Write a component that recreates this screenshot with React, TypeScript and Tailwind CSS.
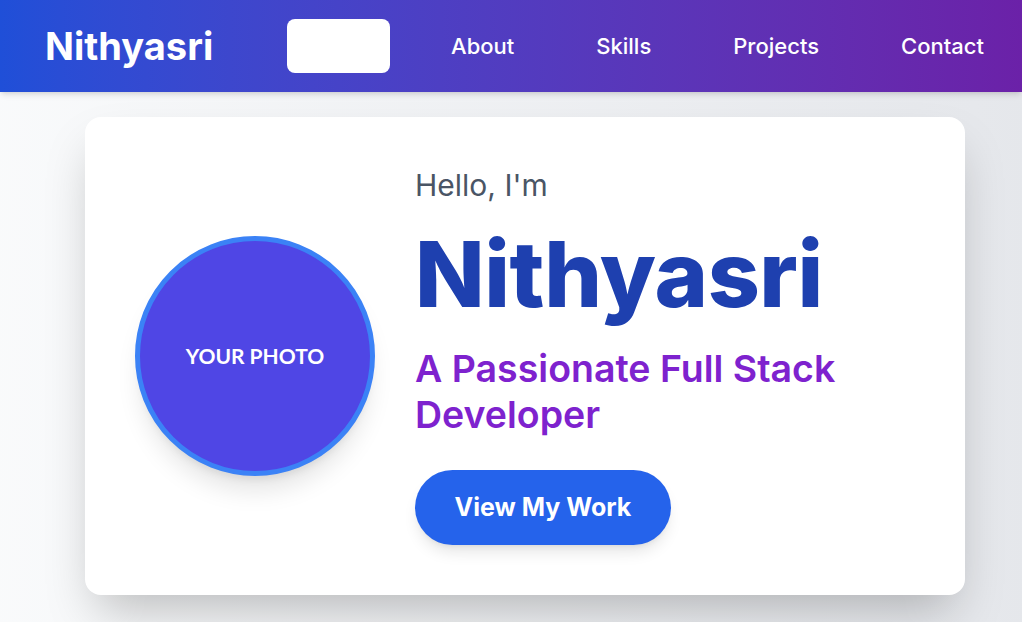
export default function App() {
  return (
    <div className="min-h-screen bg-gradient-to-r from-gray-50 to-gray-200 font-['Inter',sans-serif]">
      <header className="h-[92px] bg-gradient-to-r from-[#1f4fd8] to-[#6b21a8] shadow-md">
        <nav className="h-full flex items-center pl-[45px] pr-[38px]">
          <span className="text-[38px] font-bold text-white">Nithyasri</span>
          <div className="ml-[74px] w-[103px] h-[54px] bg-white rounded-lg" />
          <div className="ml-auto flex items-center gap-[82px] text-[22px] font-medium text-white">
            <a href="#about">About</a>
            <a href="#skills">Skills</a>
            <a href="#projects">Projects</a>
            <a href="#contact">Contact</a>
          </div>
        </nav>
      </header>

      <main className="flex pl-[85px] pt-[25px]">
        <section className="w-[880px] h-[478px] bg-white rounded-2xl shadow-2xl flex items-center px-[50px]">
          <div className="w-[240px] h-[240px] shrink-0 rounded-full bg-[#4f46e5] border-[5px] border-[#3b82f6] shadow-xl flex items-center justify-center">
            <span className="text-white text-[21px] font-bold font-['Lato',sans-serif]">YOUR PHOTO</span>
          </div>
          <div className="ml-[40px] flex flex-col">
            <p className="text-[30px] text-gray-600 leading-tight">Hello, I'm</p>
            <h1 className="mt-[24px] text-[91px] leading-none font-extrabold tracking-[-0.005em] text-[#1e40af]">Nithyasri</h1>
            <h2 className="mt-[26px] text-[37.5px] leading-[46px] font-semibold text-[#7e22ce] max-w-[470px]">
              A Passionate Full Stack Developer
            </h2>
            <div className="mt-[32px]">
              <button className="w-[256px] h-[75px] rounded-full bg-[#2563eb] text-white text-[25px] font-bold shadow-lg">
                View My Work
              </button>
            </div>
          </div>
        </section>
      </main>
    </div>
  )
}
